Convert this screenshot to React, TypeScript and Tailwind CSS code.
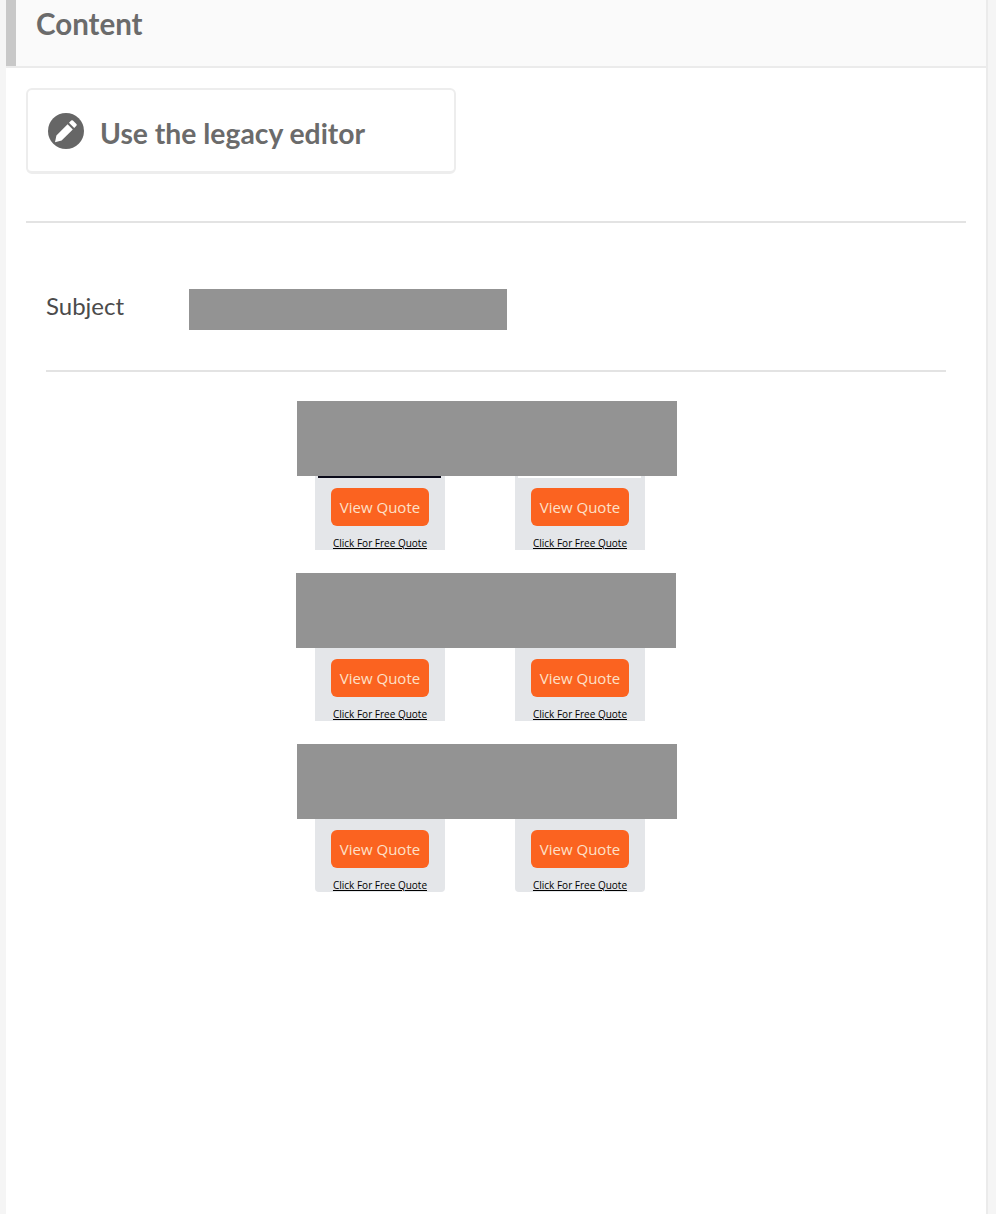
const FONT = "font-['Open_Sans','Noto_Sans',sans-serif]";

function QuoteCard({ topLine, rounded }: { topLine?: string; rounded?: boolean }) {
  return (
    <div className={`w-[130px] bg-[#e4e6e9] flex flex-col items-center ${rounded ? 'rounded-b' : ''}`}>
      <div className={`w-[123px] mr-0.5 shrink-0 ${topLine ?? 'h-px'}`} />
      <div className={`mt-2.5 w-[98px] h-[38px] shrink-0 rounded-md bg-[#fb6320] text-[#fde0c8] text-[15px] flex items-center justify-center ${FONT}`}>
        View Quote
      </div>
      <div className={`mt-[9px] h-4 shrink-0 text-[10px] leading-4 text-black underline ${FONT}`}>Click For Free Quote</div>
    </div>
  );
}

function QuoteBlock({ margin, height, topLeft, topRight, rounded }: { margin: string; height: string; topLeft?: string; topRight?: string; rounded?: boolean }) {
  return (
    <div className={`${margin} w-[380px]`}>
      <div className="h-[75px] bg-[#939393]" />
      <div className={`flex gap-[70px] ${height} ${margin.includes('290px') ? 'pl-[19px]' : 'pl-[18px]'}`}>
        <QuoteCard topLine={topLeft} rounded={rounded} />
        <QuoteCard topLine={topRight} rounded={rounded} />
      </div>
    </div>
  );
}

export default function App() {
  return (
    <div className="min-h-[1214px] bg-[#f5f5f5] pl-[6px] pr-2">
      <div className="min-h-[1214px] bg-white border-r-2 border-[#ebebeb]">
        <div className="h-[68px] flex bg-[#fafafa] border-b-2 border-[#ebebeb]">
          <div className="w-[10px] bg-[#c8c8c8]" />
          <h1 className="ml-5 text-[29.5px] leading-[47px] font-bold text-[#6b6b6b] font-['Lato',sans-serif]">Content</h1>
        </div>

        <div className="mx-5 mt-5 w-[430px] h-[86px] flex items-center pl-5 rounded-md border-2 border-[#ededed] border-b-[3px]">
          <svg viewBox="0 0 36 36" className="w-9 h-9 shrink-0">
            <circle cx="18" cy="18" r="18" fill="#666666" />
            <path d="M23.2 7.6a1.2 1.2 0 0 1 1.7 0l3.5 3.5a1.2 1.2 0 0 1 0 1.7l-2.2 2.2-5.2-5.2z M19.6 11.2l5.2 5.2-11.2 11.2-6.6 1.6 1.4-6.8z" fill="#ffffff" />
          </svg>
          <span className="ml-4 pt-1.5 text-[28.3px] font-bold text-[#6b6b6b] font-['Lato',sans-serif]">Use the legacy editor</span>
        </div>

        <div className="mx-5 mt-[47px] h-0.5 bg-[#e3e3e3]" />

        <div className="ml-10 mt-[66px] flex items-start h-[41px]">
          <span className="w-[143px] text-[24px] leading-[34px] text-[#4b4b4b] font-['Lato',sans-serif]">Subject</span>
          <div className="w-[318px] h-[41px] bg-[#939393]" />
        </div>

        <div className="mx-10 mt-10 h-0.5 bg-[#e3e3e3]" />

        <div className="mt-[29px]">
          <QuoteBlock margin="ml-[291px]" height="h-[74px]" topLeft="h-0.5 bg-[#0b0b1a]" topRight="h-0.5 bg-white" />
          <QuoteBlock margin="ml-[290px] mt-[23px]" height="h-[73px]" />
          <QuoteBlock margin="ml-[291px] mt-[23px]" height="h-[73px]" rounded />
        </div>
      </div>
    </div>
  );
}
